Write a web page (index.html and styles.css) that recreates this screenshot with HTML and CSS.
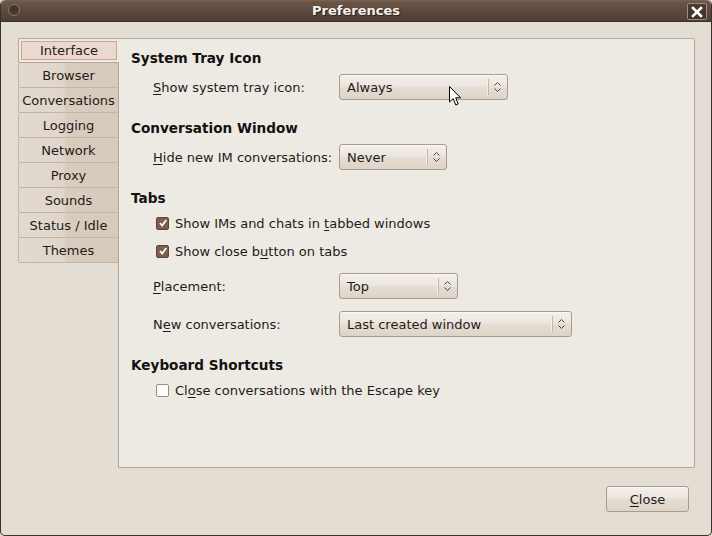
FILE: index.html
```html
<!DOCTYPE html>
<html>
<head>
<meta charset="utf-8">
<link rel="stylesheet" href="styles.css">
</head>
<body>
<div class="window">
  <div class="titlebar">
    <span class="menu-dot"></span>
    <span class="title">Preferences</span>
    <span class="close-x">
      <svg width="12" height="12" viewBox="0 0 12 12"><path d="M2 2 L10 10 M10 2 L2 10" stroke="#fff" stroke-width="2.6" stroke-linecap="square"/></svg>
    </span>
  </div>
  <div class="body">
    <div class="notebook">
      <div class="tabs">
        <div class="tab active"><span class="focus">Interface</span></div>
        <div class="tab">Browser</div>
        <div class="tab">Conversations</div>
        <div class="tab">Logging</div>
        <div class="tab">Network</div>
        <div class="tab">Proxy</div>
        <div class="tab">Sounds</div>
        <div class="tab">Status / Idle</div>
        <div class="tab">Themes</div>
      </div>
      <div class="panel">
        <div class="heading h-first">System Tray Icon</div>
        <div class="row">
          <span class="label"><u>S</u>how system tray icon:</span>
          <span class="combo w168"><span class="combo-text">Always</span><span class="combo-arrow"><svg width="9" height="12" viewBox="0 0 9 12"><path d="M1.5 4.5 L4.5 1.5 L7.5 4.5 M1.5 7.5 L4.5 10.5 L7.5 7.5" fill="none" stroke="#4a4540" stroke-width="1"/></svg></span></span>
        </div>
        <div class="heading">Conversation Window</div>
        <div class="row">
          <span class="label"><u>H</u>ide new IM conversations:</span>
          <span class="combo w107"><span class="combo-text">Never</span><span class="combo-arrow"><svg width="9" height="12" viewBox="0 0 9 12"><path d="M1.5 4.5 L4.5 1.5 L7.5 4.5 M1.5 7.5 L4.5 10.5 L7.5 7.5" fill="none" stroke="#4a4540" stroke-width="1"/></svg></span></span>
        </div>
        <div class="heading">Tabs</div>
        <div class="check-row c-first">
          <span class="check on"><svg width="10" height="10" viewBox="0 0 10 10"><path d="M2 5 L4.2 7.5 L8.2 2" fill="none" stroke="#fff" stroke-width="1.8"/></svg></span>
          <span>Show IMs and chats in <u>t</u>abbed windows</span>
        </div>
        <div class="check-row c-second">
          <span class="check on"><svg width="10" height="10" viewBox="0 0 10 10"><path d="M2 5 L4.2 7.5 L8.2 2" fill="none" stroke="#fff" stroke-width="1.8"/></svg></span>
          <span>Show close b<u>u</u>tton on tabs</span>
        </div>
        <div class="row r-gap">
          <span class="label"><u>P</u>lacement:</span>
          <span class="combo w118"><span class="combo-text">Top</span><span class="combo-arrow"><svg width="9" height="12" viewBox="0 0 9 12"><path d="M1.5 4.5 L4.5 1.5 L7.5 4.5 M1.5 7.5 L4.5 10.5 L7.5 7.5" fill="none" stroke="#4a4540" stroke-width="1"/></svg></span></span>
        </div>
        <div class="row r-gap">
          <span class="label">N<u>e</u>w conversations:</span>
          <span class="combo w232"><span class="combo-text">Last created window</span><span class="combo-arrow"><svg width="9" height="12" viewBox="0 0 9 12"><path d="M1.5 4.5 L4.5 1.5 L7.5 4.5 M1.5 7.5 L4.5 10.5 L7.5 7.5" fill="none" stroke="#4a4540" stroke-width="1"/></svg></span></span>
        </div>
        <div class="heading">Keyboard Shortcuts</div>
        <div class="check-row c-first">
          <span class="check"></span>
          <span>Cl<u>o</u>se conversations with the Escape key</span>
        </div>
      </div>
    </div>
    <div class="buttons">
      <button class="btn"><u>C</u>lose</button>
    </div>
  </div>
  <svg class="cursor" width="14" height="21" viewBox="0 0 14 21"><path d="M0.5 0.5 L0.5 16 L4.2 12.6 L6.8 19 L9.2 18 L6.7 11.8 L11.6 11.8 Z" fill="#fff" stroke="#000" stroke-width="1" stroke-linejoin="miter"/></svg>
</div>
</body>
</html>
```

FILE: styles.css
```css
* { box-sizing: border-box; }
html, body { margin: 0; padding: 0; }
body {
  width: 712px;
  height: 536px;
  overflow: hidden;
  font-family: "DejaVu Sans", "Liberation Sans", sans-serif;
  font-size: 13px;
  color: #1f1b17;
  background: #e4ddd4;
}
u { text-decoration: underline; text-underline-offset: 2px; }

.window {
  position: relative;
  width: 712px;
  height: 536px;
  display: flex;
  flex-direction: column;
  background: #e4ddd4;
  border: 1px solid #3a302a;
  border-top: none;
  border-radius: 5px 5px 5px 5px;
  overflow: hidden;
}

.titlebar {
  height: 22px;
  flex: none;
  display: flex;
  align-items: center;
  justify-content: center;
  position: relative;
  background: linear-gradient(to bottom, #7a6354 0, #6b5547 2px, #5d493d 11px, #4e3f35 21px);
  border-bottom: 1px solid #3b302a;
  border-radius: 5px 5px 0 0;
}
.title {
  color: #f4f0ec;
  font-weight: bold;
  font-size: 13px;
  text-shadow: 1px 1px 1px #2a201a;
}
.menu-dot {
  position: absolute;
  left: 7px;
  top: 4px;
  width: 12px;
  height: 12px;
  border-radius: 50%;
  border: 1px solid #8a7566;
  background: radial-gradient(circle at 50% 35%, #3e312a, #4f4037);
}
.close-x {
  position: absolute;
  right: 4px;
  top: 3px;
  width: 20px;
  height: 17px;
  border: 1px solid #9c8a7c;
  border-radius: 2px;
  background: linear-gradient(#4b3c33, #3f322b);
  display: flex;
  align-items: center;
  justify-content: center;
}

.body {
  flex: 1;
  padding: 16px 16px 0 17px;
  display: flex;
  flex-direction: column;
}

.notebook {
  display: flex;
  height: 430px;
}
.tabs {
  width: 101px;
  flex: none;
  display: flex;
  flex-direction: column;
  margin-right: -1px;
  position: relative;
  z-index: 1;
}
.tab {
  height: 25px;
  display: flex;
  align-items: center;
  justify-content: center;
  border: 1px solid #c2b6a8;
  border-right: none;
  border-top: none;
  margin-right: 1px;
  border-radius: 2px 0 0 2px;
  background: linear-gradient(to right, #e2d9cf 0, #e0d6cb 44%, #d8ccbf 48%, #d6cabc 100%);
  color: #1f1b17;
}
.tab.active {
  background: #edeae4;
  border-color: #b5a898;
  border-top: 1px solid #b5a898;
  margin-right: 0;
  padding: 2px 2px 3px 2px;
}
.tab .focus {
  display: flex;
  align-items: center;
  justify-content: center;
  width: 100%;
  height: 19px;
  border: 1px solid #d5a292;
  background: #ead9cf;
}

.panel {
  flex: 1;
  background: #edeae4;
  border: 1px solid #b5a898;
  border-radius: 0 2px 2px 0;
  padding: 0 0 0 12px;
  display: flex;
  flex-direction: column;
}

.heading {
  font-weight: bold;
  font-size: 13.6px;
  height: 18px;
  line-height: 18px;
  margin-top: 19px;
  color: #15110e;
}
.heading.h-first { margin-top: 10px; }

.row {
  display: flex;
  align-items: center;
  height: 26px;
  margin-top: 7px;
  padding-left: 22px;
}
.row.r-gap { margin-top: 12px; }
.label {
  width: 186px;
  flex: none;
}

.combo {
  height: 26px;
  display: flex;
  align-items: center;
  border: 1px solid #a99c8d;
  border-radius: 3px;
  background: linear-gradient(to bottom, #f3efea 0, #ece6df 45%, #e4dcd2 55%, #ddd4c9 100%);
  box-shadow: inset 0 1px 0 #faf8f5;
}
.w168 { width: 169px; }
.w107 { width: 108px; }
.w118 { width: 119px; }
.w232 { width: 233px; }
.combo-text {
  flex: 1;
  padding-left: 7px;
}
.combo-arrow {
  width: 18px;
  height: 16px;
  border-left: 1px solid #c3b7aa;
  box-shadow: -1px 0 0 #f4f0eb;
  display: flex;
  align-items: center;
  justify-content: center;
  margin-right: 1px;
}

.check-row {
  display: flex;
  align-items: center;
  height: 20px;
  padding-left: 25px;
}
.check-row.c-first { margin-top: 6px; }
.check-row.c-second { margin-top: 8px; }
.check {
  width: 13px;
  height: 13px;
  flex: none;
  margin-right: 6px;
  border: 1px solid #9c8d7e;
  border-radius: 2px;
  background: #fdfcfb;
  display: flex;
  align-items: center;
  justify-content: center;
}
.check.on {
  background: #7d5e4d;
  border-color: #5e4537;
}

.buttons {
  display: flex;
  justify-content: flex-end;
  padding-right: 6px;
  margin-top: 18px;
}
.btn {
  width: 83px;
  height: 26px;
  font-family: inherit;
  font-size: 13px;
  color: #1f1b17;
  border: 1px solid #a99c8d;
  border-radius: 3px;
  background: linear-gradient(to bottom, #f3efea 0, #ece6df 45%, #e4dcd2 55%, #ddd4c9 100%);
  box-shadow: inset 0 1px 0 #faf8f5;
  padding: 0;
}

.cursor {
  position: absolute;
  left: 448px;
  top: 86px;
}
```
